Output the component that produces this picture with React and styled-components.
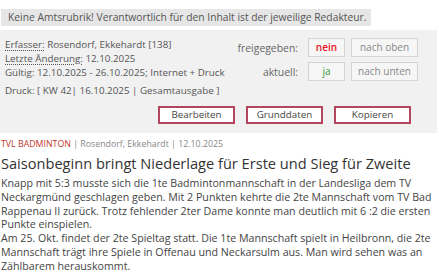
import React from "react";
import styled, { createGlobalStyle } from "styled-components";

const GlobalStyle = createGlobalStyle`
  body {
    margin: 0;
    background: #ffffff;
    font-family: "Open Sans", "DejaVu Sans", sans-serif;
    color: #555555;
  }
`;

const Page = styled.div`
  width: 439px;
  padding: 9px 2px 0 1px;
  box-sizing: border-box;
`;

const Notice = styled.div`
  width: fit-content;
  background: #e6e6e6;
  font-size: 10.3px;
  line-height: 17px;
  padding: 0 5px 0 7px;
  color: #555;
`;

const Panel = styled.div`
  margin-top: 4px;
  margin-left: -1px;
  background: #f1f1f1;
  padding: 8px 19px 9px 5px;
  font-size: 9.8px;
`;

const Top = styled.div`
  display: flex;
  justify-content: space-between;
  align-items: flex-start;
`;

const Info = styled.div`
  display: flex;
  flex-direction: column;
  line-height: 14px;
`;

const Hint = styled.span`
  text-decoration: underline dotted;
  text-underline-offset: 2px;
`;

const PrintLine = styled.div`
  margin-top: 4px;
`;

const Status = styled.div`
  display: grid;
  grid-template-columns: auto 37px 67px;
  column-gap: 6px;
  row-gap: 5px;
  align-items: center;
`;

const Label = styled.span`
  text-align: right;
  padding-right: 4px;
  font-size: 10.4px;
  color: #666;
`;

const Box = styled.div`
  height: 19px;
  box-sizing: border-box;
  border: 1px solid #d4d4d4;
  background: #f6f6f6;
  text-align: center;
  line-height: 17px;
  font-size: 10px;
  color: ${(p) => p.color || "#888"};
  font-weight: ${(p) => (p.strong ? 600 : 400)};
`;

const Actions = styled.div`
  display: flex;
  justify-content: flex-end;
  gap: 11px;
  margin-top: 8px;
  padding-right: 7px;
`;

const ActionButton = styled.button`
  width: 77px;
  height: 18px;
  box-sizing: border-box;
  border: 2px solid #b3455f;
  background: #ffffff;
  font-family: "Open Sans", sans-serif;
  font-size: 9.8px;
  color: #444;
  padding: 0;
  line-height: 14px;
`;

const Meta = styled.div`
  margin-top: 5px;
  font-size: 8.8px;
  color: #888;
`;

const Rubric = styled.span`
  color: #c0392b;
`;

const Title = styled.h1`
  margin: 3px 0 0;
  font-size: 14.6px;
  font-weight: 400;
  color: #333;
  line-height: 20px;
`;

const Body = styled.div`
  margin-top: 4px;
  font-size: 10.65px;
  line-height: 13.8px;
  color: #444;
`;

export default function App() {
  return (
    <Page>
      <GlobalStyle />
      <Notice>
        Keine Amtsrubrik! Verantwortlich für den Inhalt ist der jeweilige
        Redakteur.
      </Notice>
      <Panel>
        <Top>
          <Info>
            <span>
              <Hint>Erfasser:</Hint> Rosendorf, Ekkehardt [138]
            </span>
            <span>
              <Hint>Letzte Änderung:</Hint> 12.10.2025
            </span>
            <span>Gültig: 12.10.2025 - 26.10.2025; Internet + Druck</span>
            <PrintLine>Druck: [ KW 42| 16.10.2025 | Gesamtausgabe ]</PrintLine>
          </Info>
          <Status>
            <Label>freigegeben:</Label>
            <Box color="#e8141e" strong>
              nein
            </Box>
            <Box>nach oben</Box>
            <Label>aktuell:</Label>
            <Box color="#3a9a3a">ja</Box>
            <Box>nach unten</Box>
          </Status>
        </Top>
        <Actions>
          <ActionButton>Bearbeiten</ActionButton>
          <ActionButton>Grunddaten</ActionButton>
          <ActionButton>Kopieren</ActionButton>
        </Actions>
      </Panel>
      <Meta>
        <Rubric>TVL BADMINTON</Rubric> | Rosendorf, Ekkehardt | 12.10.2025
      </Meta>
      <Title>Saisonbeginn bringt Niederlage für Erste und Sieg für Zweite</Title>
      <Body>
        Knapp mit 5:3 musste sich die 1te Badmintonmannschaft in der Landesliga
        dem TV Neckargmünd geschlagen geben. Mit 2 Punkten kehrte die 2te
        Mannschaft vom TV Bad Rappenau II zurück. Trotz fehlender 2ter Dame
        konnte man deutlich mit 6 :2 die ersten Punkte einspielen.
        <br />
        Am 25. Okt. findet der 2te Spieltag statt. Die 1te Mannschaft spielt in
        Heilbronn, die 2te Mannschaft trägt ihre Spiele in Offenau und
        Neckarsulm aus. Man wird sehen was an Zählbarem herauskommt.
      </Body>
    </Page>
  );
}
